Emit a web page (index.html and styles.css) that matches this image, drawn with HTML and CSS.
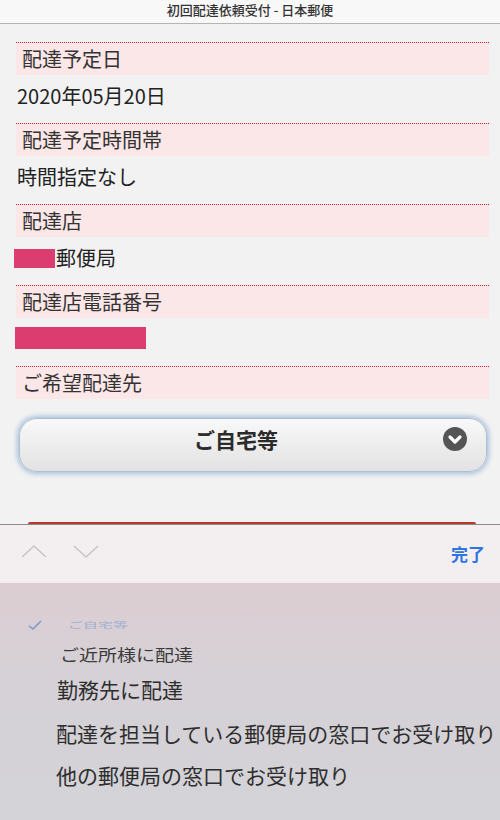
FILE: index.html
```html
<!DOCTYPE html>
<html lang="ja">
<head>
  <meta charset="UTF-8">
  <meta name="viewport" content="width=device-width, initial-scale=1.0">
  <title>初回配達依頼受付 - 日本郵便</title>
  <link rel="stylesheet" href="styles.css">
</head>
<body>
  <header class="titlebar">初回配達依頼受付 - 日本郵便</header>

  <main class="form">
    <div class="field">
      <div class="field-label">配達予定日</div>
      <div class="field-value">2020年05月20日</div>
    </div>
    <div class="field">
      <div class="field-label">配達予定時間帯</div>
      <div class="field-value">時間指定なし</div>
    </div>
    <div class="field">
      <div class="field-label">配達店</div>
      <div class="field-value"><span class="masked masked-office"></span>郵便局</div>
    </div>
    <div class="field">
      <div class="field-label">配達店電話番号</div>
      <div class="field-value"><span class="masked masked-phone"></span></div>
    </div>
    <div class="field">
      <div class="field-label">ご希望配達先</div>
    </div>

    <div class="select-wrap">
      <button class="select-btn">
        ご自宅等
        <span class="select-icon">
          <svg width="24" height="24" viewBox="0 0 24 24">
            <circle cx="12" cy="12" r="12" fill="#555"/>
            <polyline points="7,10 12,15 17,10" fill="none" stroke="#fff" stroke-width="3.2" stroke-linecap="round" stroke-linejoin="round"/>
          </svg>
        </span>
      </button>
    </div>

    <div class="next-btn-peek"></div>
  </main>

  <div class="picker-toolbar">
    <div class="nav-arrows">
      <svg width="28" height="16" viewBox="0 0 28 16">
        <polyline points="2,13 14,2 26,13" fill="none" stroke="#c6c6c6" stroke-width="1.6"/>
      </svg>
      <svg width="28" height="16" viewBox="0 0 28 16">
        <polyline points="2,2 14,13 26,2" fill="none" stroke="#c6c6c6" stroke-width="1.6"/>
      </svg>
    </div>
    <span class="done-btn">完了</span>
  </div>

  <div class="picker">
    <div class="picker-row row-checked">
      <svg class="check" width="14" height="10" viewBox="0 0 14 10">
        <polyline points="1,6 5,9 13,1" fill="none" stroke="#8ea2cc" stroke-width="1.8"/>
      </svg>
      <span class="faded">ご自宅等</span>
    </div>
    <div class="picker-row row-near">ご近所様に配達</div>
    <div class="picker-row row-work">勤務先に配達</div>
    <div class="picker-row row-office">配達を担当している郵便局の窓口でお受け取り</div>
    <div class="picker-row row-other">他の郵便局の窓口でお受け取り</div>
  </div>
</body>
</html>
```

FILE: styles.css
```css
body {
  margin: 0;
  width: 500px;
  height: 820px;
  overflow: hidden;
  background-color: #f2f2f2;
  font-family: "Noto Sans CJK JP", "Noto Sans", sans-serif;
  color: #2a2a2a;
}

.titlebar {
  height: 23px;
  line-height: 20px;
  text-align: center;
  font-size: 13px;
  font-weight: 500;
  color: #333;
  background-color: #f8f8f8;
  border-bottom: 1px solid #b4b4b4;
}

.form {
  padding: 18px 11px 0 16px;
  height: 500px;
  box-sizing: border-box;
  display: flex;
  flex-direction: column;
}

.field-label {
  border-top: 1px dotted #c41f3c;
  background-color: #fbe7e7;
  height: 32px;
  line-height: 32px;
  padding-left: 6px;
  font-size: 20px;
  color: #333;
}

.field-value {
  height: 48px;
  box-sizing: border-box;
  padding: 8px 0 0 1px;
  line-height: 26px;
  font-size: 20px;
  color: #222;
}

.masked {
  display: inline-block;
  background-color: #dc3d70;
}

.masked-office {
  width: 41px;
  height: 19px;
  margin-left: -3px;
  margin-right: 1px;
  vertical-align: -2px;
}

.masked-phone {
  width: 131px;
  height: 22px;
  margin-left: -2px;
  vertical-align: -2px;
}

.select-wrap {
  margin: 19px 2px 0 3px;
}

.select-btn {
  position: relative;
  width: 100%;
  height: 54px;
  padding: 8px 34px 20px 0;
  border: 1px solid #aebfd4;
  border-radius: 18px;
  background: linear-gradient(#f9f9f9, #ececec 55%, #e2e2e2);
  box-shadow: 0 0 5px 2px #a9c0dc;
  font-family: "Noto Sans CJK JP", sans-serif;
  font-size: 21px;
  font-weight: bold;
  line-height: 24px;
  color: #2b2b2b;
  text-align: center;
}

.select-icon {
  position: absolute;
  right: 19px;
  top: 8px;
  height: 24px;
}

.next-btn-peek {
  margin: 50px 13px 0 12px;
  height: 2px;
  border-radius: 6px 6px 0 0;
  background-color: #b63a2c;
}

.picker-toolbar {
  height: 58px;
  border-top: 1px solid #8c8c8c;
  background-color: #f3eff0;
  display: flex;
  align-items: center;
  justify-content: space-between;
  padding: 0 15px 0 20px;
}

.nav-arrows {
  display: flex;
  gap: 24px;
  margin-top: -5px;
}

.done-btn {
  font-size: 17px;
  font-weight: bold;
  color: #2f74df;
  margin-top: -2px;
}

.picker {
  height: 237px;
  padding-top: 27px;
  box-sizing: border-box;
  background: linear-gradient(#dccdd2, #d6d1d6 35%, #d3d3d8);
  color: #2e2e2e;
}

.picker-row {
  white-space: nowrap;
  padding-left: 56px;
}

.row-checked {
  height: 30px;
  line-height: 30px;
  padding-left: 28px;
  display: flex;
  align-items: center;
}

.check {
  margin-right: 26px;
}

.faded {
  font-size: 15px;
  color: #9fb0d2;
  transform: scaleY(0.55);
  display: inline-block;
}

.row-near {
  height: 28px;
  line-height: 28px;
  padding-left: 60px;
  font-size: 19px;
  color: #3a3a3a;
  transform: scaleY(0.85);
}

.row-work {
  height: 42px;
  line-height: 42px;
  padding-left: 57px;
  font-size: 21px;
}

.row-office {
  height: 46px;
  line-height: 46px;
  font-size: 21px;
}

.row-other {
  height: 38px;
  line-height: 38px;
  font-size: 21px;
}
```
